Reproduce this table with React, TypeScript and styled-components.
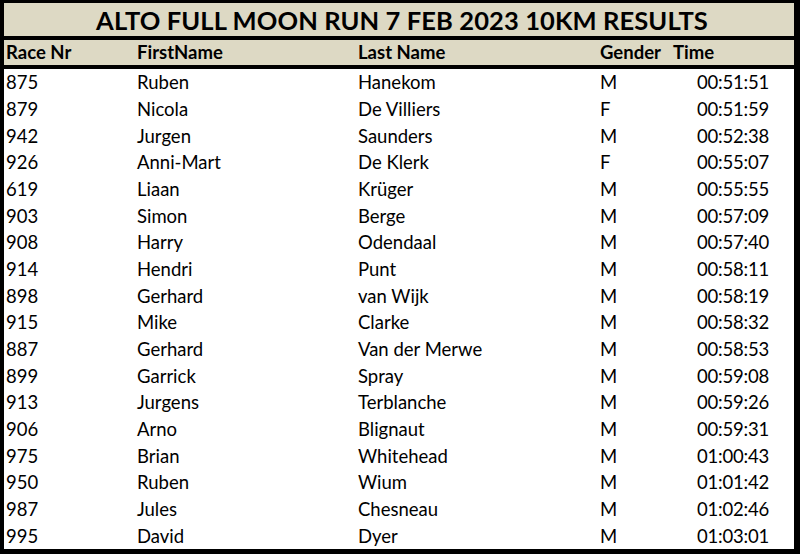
import styled, { createGlobalStyle } from 'styled-components';

const GlobalStyle = createGlobalStyle`
  html, body {
    margin: 0;
    padding: 0;
    background: #000;
  }
  #root {
    width: 800px;
    height: 554px;
  }
`;

const Sheet = styled.div`
  box-sizing: border-box;
  width: 800px;
  height: 554px;
  background: #000;
  padding: 3px 6px 5px 4px;
  display: flex;
  flex-direction: column;
  gap: 4px;
  font-family: Lato, 'Open Sans', sans-serif;
  color: #000;
`;

const Title = styled.div`
  height: 33px;
  background: #ddd9c4;
  display: flex;
  align-items: center;
  justify-content: center;
  font-weight: bold;
  font-size: 25.5px;
  letter-spacing: 0.1px;
  padding-left: 6px;
`;

const Grid = styled.div`
  display: grid;
  grid-template-columns: 131px 221px 242px 73px 123px;
`;

const HeadRow = styled(Grid)`
  height: 25px;
  background: #ddd9c4;
  font-weight: bold;
  font-size: 18.5px;
`;

const Body = styled.div`
  flex: 1;
  background: #fff;
  display: grid;
  grid-auto-rows: 1fr;
`;

const Cell = styled.div<{ $right?: boolean }>`
  display: flex;
  align-items: center;
  justify-content: ${p => (p.$right ? 'flex-end' : 'flex-start')};
  padding: ${p => (p.$right ? '0 25px 0 0' : '0 0 0 2px')};
  font-size: 18.5px;
  white-space: nowrap;
`;

const TimeCell = styled(Cell)`
  letter-spacing: -0.2px;
`;

const HeadCell = styled(Cell)`
  padding-bottom: 1px;
`;

const results = [
  ['875', 'Ruben', 'Hanekom', 'M', '00:51:51'],
  ['879', 'Nicola', 'De Villiers', 'F', '00:51:59'],
  ['942', 'Jurgen', 'Saunders', 'M', '00:52:38'],
  ['926', 'Anni-Mart', 'De Klerk', 'F', '00:55:07'],
  ['619', 'Liaan', 'Krüger', 'M', '00:55:55'],
  ['903', 'Simon', 'Berge', 'M', '00:57:09'],
  ['908', 'Harry', 'Odendaal', 'M', '00:57:40'],
  ['914', 'Hendri', 'Punt', 'M', '00:58:11'],
  ['898', 'Gerhard', 'van Wijk', 'M', '00:58:19'],
  ['915', 'Mike', 'Clarke', 'M', '00:58:32'],
  ['887', 'Gerhard', 'Van der Merwe', 'M', '00:58:53'],
  ['899', 'Garrick', 'Spray', 'M', '00:59:08'],
  ['913', 'Jurgens', 'Terblanche', 'M', '00:59:26'],
  ['906', 'Arno', 'Blignaut', 'M', '00:59:31'],
  ['975', 'Brian', 'Whitehead', 'M', '01:00:43'],
  ['950', 'Ruben', 'Wium', 'M', '01:01:42'],
  ['987', 'Jules', 'Chesneau', 'M', '01:02:46'],
  ['995', 'David', 'Dyer', 'M', '01:03:01'],
];

export default function App() {
  return (
    <>
      <GlobalStyle />
      <Sheet>
        <Title>ALTO FULL MOON RUN 7 FEB 2023 10KM RESULTS</Title>
        <HeadRow>
          <HeadCell>Race Nr</HeadCell>
          <HeadCell>FirstName</HeadCell>
          <HeadCell>Last Name</HeadCell>
          <HeadCell>Gender</HeadCell>
          <HeadCell>Time</HeadCell>
        </HeadRow>
        <Body>
          {results.map(r => (
            <Grid key={r[0]}>
              <Cell>{r[0]}</Cell>
              <Cell>{r[1]}</Cell>
              <Cell>{r[2]}</Cell>
              <Cell>{r[3]}</Cell>
              <TimeCell $right>{r[4]}</TimeCell>
            </Grid>
          ))}
        </Body>
      </Sheet>
    </>
  );
}
